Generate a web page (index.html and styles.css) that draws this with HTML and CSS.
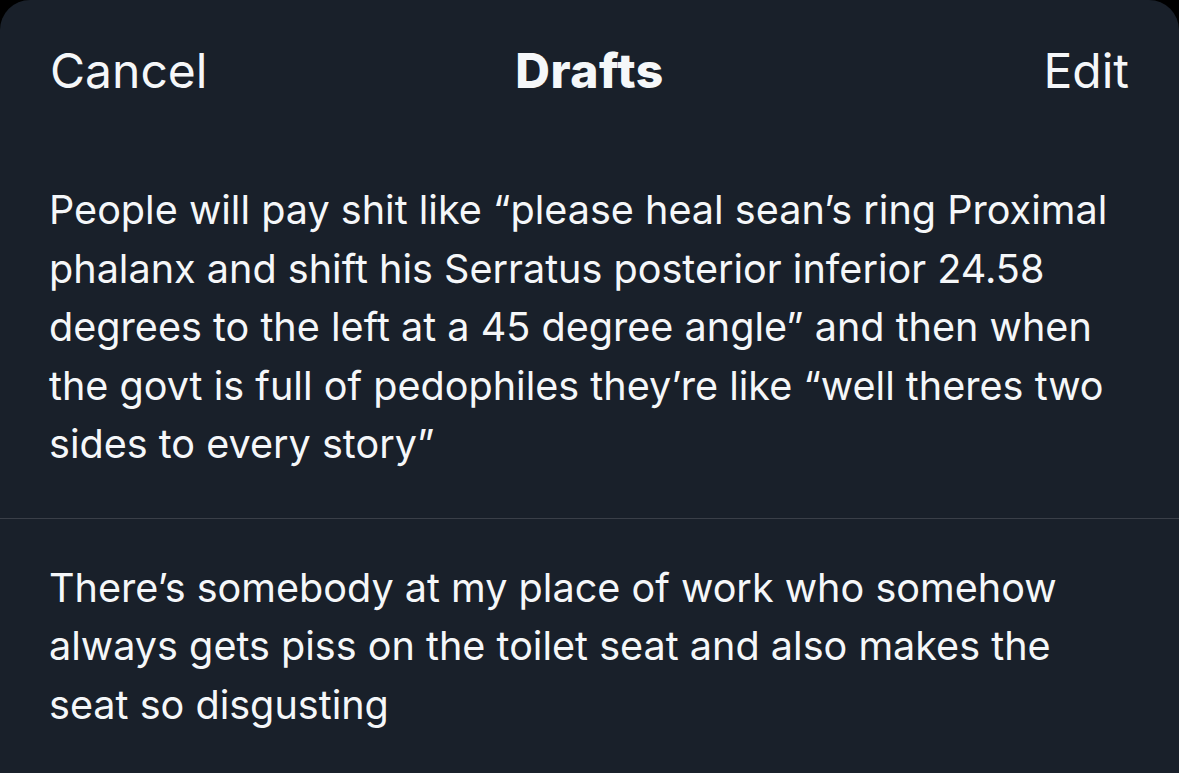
FILE: index.html
```html
<!DOCTYPE html>
<html lang="en">
<head>
<meta charset="utf-8">
<title>Drafts</title>
<link rel="stylesheet" href="styles.css">
</head>
<body>
<div class="sheet">
  <header class="bar">
    <span class="bar-btn bar-left">Cancel</span>
    <span class="bar-title">Drafts</span>
    <span class="bar-btn bar-right">Edit</span>
  </header>
  <ul class="drafts">
    <li class="draft">People will pay shit like “please heal sean’s ring Proximal<br>phalanx and shift his Serratus posterior inferior 24.58<br>degrees to the left at a 45 degree angle” and then when<br>the govt is full of pedophiles they’re like “well theres two<br>sides to every story”</li>
    <li class="draft">There’s somebody at my place of work who somehow<br>always gets piss on the toilet seat and also makes the<br>seat so disgusting</li>
  </ul>
</div>
</body>
</html>
```

FILE: styles.css
```css
html, body {
  margin: 0;
  padding: 0;
  background: #000;
  height: 100%;
}
body {
  font-family: Inter, "Liberation Sans", sans-serif;
  color: #f5f7f9;
  overflow: hidden;
}
.sheet {
  background: #19202a;
  border-radius: 30px 30px 0 0;
  min-height: 100%;
}
.bar {
  display: grid;
  grid-template-columns: 1fr auto 1fr;
  align-items: baseline;
  padding: 41px 50px 0 50px;
  font-size: 48px;
}
.bar-btn {
  font-weight: 400;
}
.bar-left {
  justify-self: start;
}
.bar-right {
  justify-self: end;
}
.bar-title {
  font-weight: 800;
  letter-spacing: 0.5px;
}
.drafts {
  list-style: none;
  margin: 81px 0 0 0;
  padding: 0;
}
.draft {
  font-size: 39.6px;
  line-height: 58.5px;
  padding: 0 40px 44px 49px;
  white-space: nowrap;
}
.draft + .draft {
  border-top: 1px solid #3a3f48;
  padding-top: 40px;
}
```
